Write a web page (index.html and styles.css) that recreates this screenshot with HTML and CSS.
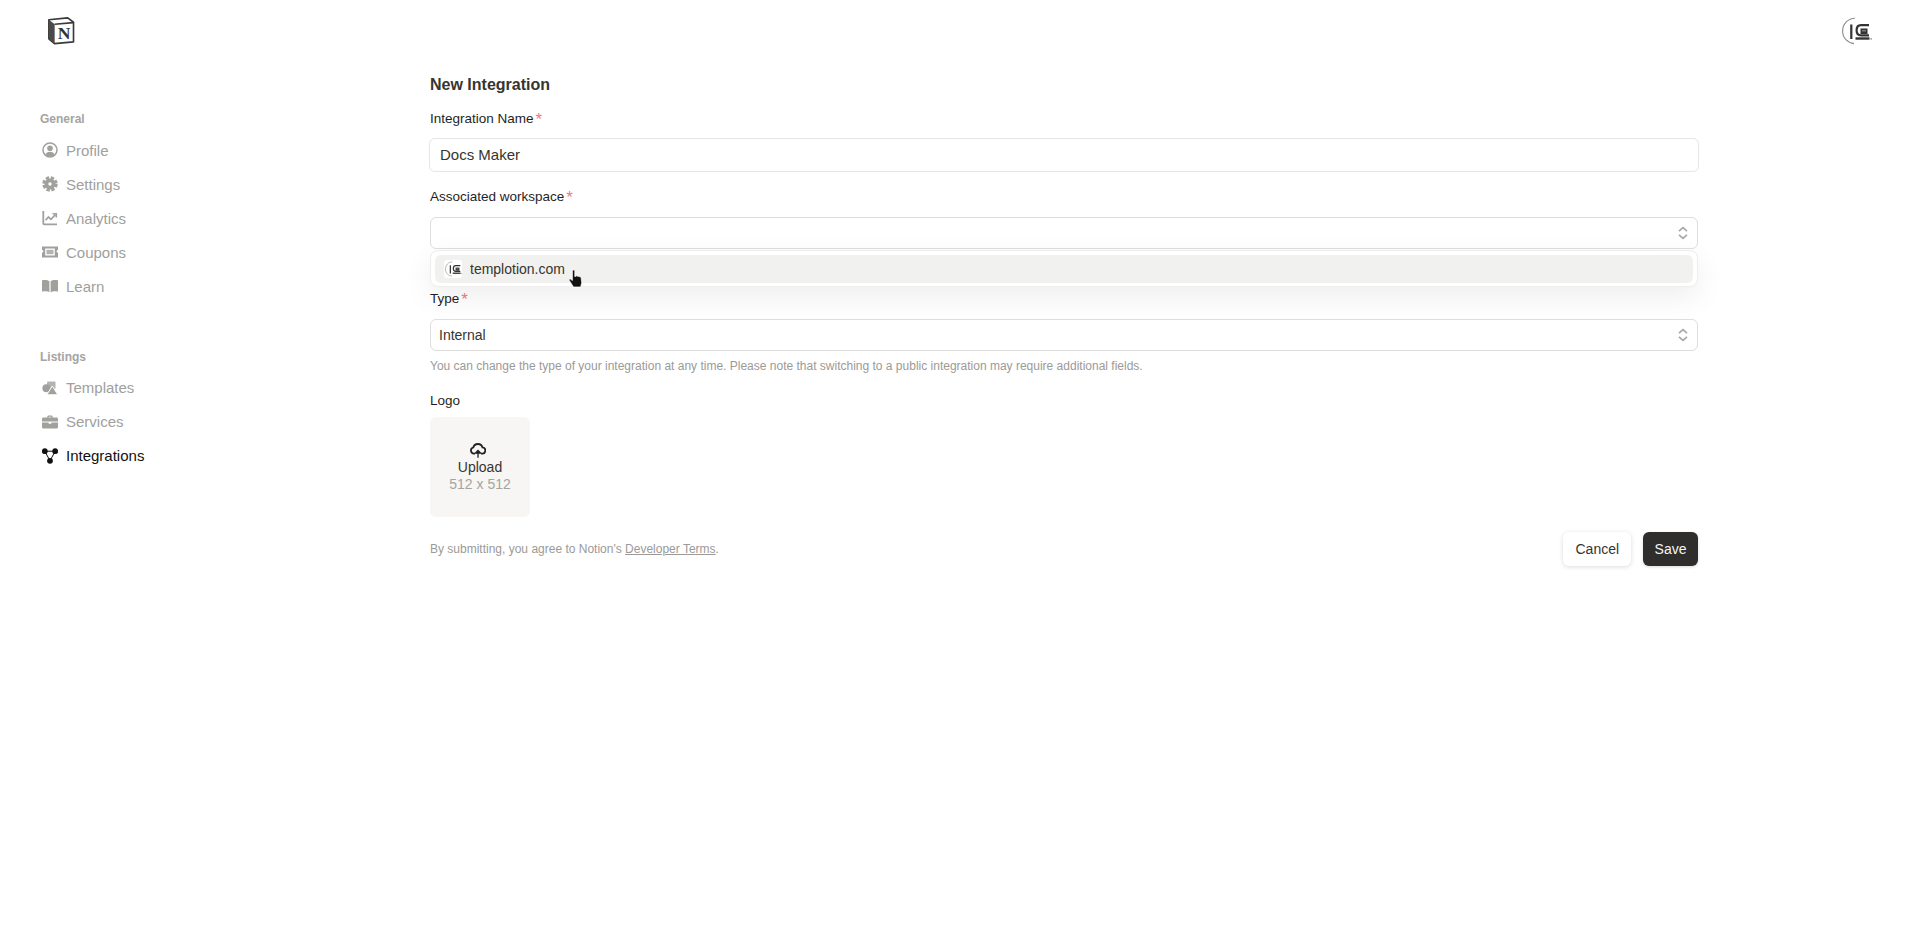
FILE: index.html
```html
<!DOCTYPE html>
<html lang="en">
<head>
<meta charset="utf-8">
<title>New Integration</title>
<link rel="stylesheet" href="styles.css">
</head>
<body>
<svg class="defs" width="0" height="0" aria-hidden="true">
  <symbol id="tlogo" viewBox="0 0 32 32">
    <path d="M15 3.200C8.200 3.200 2.600 9 2.600 16s5 12 11.400 12.600" fill="none" stroke="#8e8e8e" stroke-width="1.100"/>
    <rect x="10.200" y="9.500" width="2.200" height="14.500" fill="#333"/>
    <path d="M29 10.200h-8c-3 0-4.400 2-4.400 5.100s1.400 5.100 4.400 5.100h8" fill="none" stroke="#333" stroke-width="2.200"/>
    <rect x="20.500" y="13.500" width="7" height="5.500" fill="#333"/>
    <rect x="22" y="15.400" width="4" height=".9" fill="#aaa"/>
    <rect x="15.500" y="22.300" width="14" height="2.400" fill="#333"/>
    <rect x="30.500" y="23.300" width="1.200" height="1.200" fill="#555"/>
  </symbol>
</svg>
<header class="top">
  <svg class="notion" viewBox="0 0 28 28" aria-hidden="true">
    <path d="M1.800 3.600 20 1.800l5.600 4.200v19l-18.400 1.600-5.400-4.600z" fill="#fff" stroke="#3a3a3a" stroke-width="1.600" stroke-linejoin="round"/>
    <path d="M1.800 3.600 7.400 8v18.400l-5.600-4.600z" fill="#4a4a4a"/>
    <path d="M7.400 8 25.400 6.400" stroke="#3a3a3a" stroke-width="1.600"/>
    <text x="16.400" y="22" class="notion-n">N</text>
  </svg>
  <svg class="avatar" aria-hidden="true"><use href="#tlogo"/></svg>
</header>
<div class="layout">
  <aside class="side">
    <div class="side-label">General</div>
    <nav class="side-nav">
      <a class="side-item"><svg viewBox="0 0 16 16"><circle cx="8" cy="8" r="7" fill="none" stroke="currentColor" stroke-width="1.500"/><circle cx="8" cy="6.300" r="2.800" fill="currentColor"/><path d="M3.200 12.800c.8-2.100 2.600-3.100 4.800-3.100s4 1 4.800 3.100c-1.200 1.200-2.900 1.900-4.800 1.900s-3.600-.7-4.800-1.900z" fill="currentColor"/></svg><span>Profile</span></a>
      <a class="side-item"><svg viewBox="0 0 16 16"><circle cx="8" cy="8" r="3.600" fill="none" stroke="currentColor" stroke-width="3.800"/><circle cx="8" cy="8" r="6.300" fill="none" stroke="currentColor" stroke-width="2.800" stroke-dasharray="3.300 1.650"/></svg><span>Settings</span></a>
      <a class="side-item"><svg viewBox="0 0 16 16"><path d="M1.300 .9v12.600c0 .6.300.9.900.9H15" fill="none" stroke="currentColor" stroke-width="1.800"/><path d="M3.600 10.200 6.400 7l2.600 2.300 4.400-4.600" fill="none" stroke="currentColor" stroke-width="1.700"/><path d="M10.600 3.800h3.700v3.700" fill="none" stroke="currentColor" stroke-width="1.600"/></svg><span>Analytics</span></a>
      <a class="side-item"><svg viewBox="0 0 16 16"><path fill-rule="evenodd" d="M0 2.500h16v3.400a1.400 1.400 0 0 0 0 2.800v4.800H0V8.700a1.400 1.400 0 0 0 0-2.800zM3.200 4.600v6.800h9.600V4.600z" fill="currentColor"/><rect x="4.500" y="5.800" width="7" height="4.400" fill="currentColor" opacity=".8"/></svg><span>Coupons</span></a>
      <a class="side-item"><svg viewBox="0 0 16 16"><path d="M0 2.300c2.900-.6 5.800-.4 7.400 1V14.300c-1.700-1-4.500-1.200-7.400-.6zM16 2.300c-2.900-.6-5.800-.4-7.400 1V14.300c1.700-1 4.500-1.200 7.400-.6z" fill="currentColor"/></svg><span>Learn</span></a>
    </nav>
    <div class="side-label side-label-next">Listings</div>
    <nav class="side-nav">
      <a class="side-item"><svg viewBox="0 0 16 16"><circle cx="4.400" cy="8.300" r="4" fill="currentColor"/><rect x="5" y="1.500" width="8.500" height="7.500" rx="1" fill="currentColor" opacity=".8"/><path d="M10.300 6 15.800 14.800H4.800z" fill="currentColor" stroke="#fff" stroke-width="1"/></svg><span>Templates</span></a>
      <a class="side-item"><svg viewBox="0 0 18 16"><path fill-rule="evenodd" d="M6 3V2.200C6 1.300 6.700.8 7.500.8h3c.8 0 1.500.5 1.500 1.400V3h4.300C17.300 3 18 3.700 18 4.700v2.800H0V4.700C0 3.700.7 3 1.700 3zm1.500 0h3v-.8h-3z" fill="currentColor"/><path d="M0 8.500h7.500v1.500h3V8.500H18v5c0 1-.7 1.700-1.700 1.700H1.700C.7 15.200 0 14.500 0 13.500z" fill="currentColor"/></svg><span>Services</span></a>
      <a class="side-item side-item-active"><svg viewBox="0 0 16 16"><path d="M2.800 3.200h10.400L8 12.800z" fill="none" stroke="currentColor" stroke-width="1"/><circle cx="2.800" cy="3.200" r="2.900" fill="currentColor"/><circle cx="13.200" cy="3.200" r="2.900" fill="currentColor"/><circle cx="8" cy="12.800" r="2.900" fill="currentColor"/></svg><span>Integrations</span></a>
    </nav>
  </aside>
  <main class="form">
    <h1 class="title">New Integration</h1>
    <label class="label label-first">Integration Name<span class="req">*</span></label>
    <div class="input">Docs Maker</div>
    <label class="label label-second">Associated workspace<span class="req">*</span></label>
    <div class="combo">
      <div class="select select-open">
        <svg class="updown" viewBox="0 0 10 14"><path d="M1 5.200 5 1.600l4 3.600M1 8.800l4 3.600 4-3.600" fill="none" stroke="currentColor" stroke-width="1.700"/></svg>
      </div>
      <div class="menu">
        <div class="menu-item">
          <svg class="menu-logo" aria-hidden="true"><use href="#tlogo"/></svg>
          <span>templotion.com</span>
        </div>
      </div>
      <svg class="hand" viewBox="0 0 16 20" aria-hidden="true">
        <path d="M5 1.300c.8-.6 1.800 0 1.800 1v5.200l1-.1.100-.3c.6-.5 1.400-.3 1.800.3.600-.4 1.400-.2 1.700.4.700-.3 1.500.1 1.700.9l.6 4.800-1 4.500H5.500L1.300 11.400c-.5-.7.200-1.800 1.200-1.300l1.900 1.400V2.300c0-.4.200-.8.600-1z" fill="#111" stroke="#fff" stroke-width=".7"/>
      </svg>
    </div>
    <label class="label label-type">Type<span class="req">*</span></label>
    <div class="select select-value">Internal
      <svg class="updown" viewBox="0 0 10 14"><path d="M1 5.200 5 1.600l4 3.600M1 8.800l4 3.600 4-3.600" fill="none" stroke="currentColor" stroke-width="1.700"/></svg>
    </div>
    <p class="help">You can change the type of your integration at any time. Please note that switching to a public integration may require additional fields.</p>
    <label class="label label-logo">Logo</label>
    <div class="upload">
      <svg class="upload-icon" viewBox="0 0 16 16"><path d="M5 11.600H4.200A3.100 3.100 0 0 1 3.300 5.500 4.800 4.800 0 0 1 12.500 5.400 3.100 3.100 0 0 1 11.900 11.600H11" fill="none" stroke="currentColor" stroke-width="1.800"/><path d="M8 15.800V9M5.300 11.200 8 8.400l2.700 2.800z" fill="currentColor" stroke="currentColor" stroke-width="1.300"/></svg>
      <span class="upload-text">Upload</span>
      <span class="upload-size">512 x 512</span>
    </div>
    <div class="foot">
      <p class="terms">By submitting, you agree to Notion's <a class="terms-link">Developer Terms</a>.</p>
      <div class="actions">
        <button class="btn btn-plain" type="button">Cancel</button>
        <button class="btn btn-dark" type="button">Save</button>
      </div>
    </div>
  </main>
</div>
</body>
</html>
```
FILE: styles.css
```css
* { box-sizing: border-box; }
html, body { margin: 0; height: 100%; }
body {
  background: #fff;
  color: #37352f;
  font-family: "Liberation Sans", Arial, sans-serif;
  font-size: 14px;
  overflow: hidden;
}
.defs { position: absolute; }
.top {
  height: 60px;
  display: flex;
  justify-content: space-between;
  align-items: flex-start;
  padding: 15px 46px 0 47px;
}
.notion { width: 29px; height: 31px; display: block; }
.notion-n {
  font-family: "Liberation Serif", serif;
  font-weight: 700;
  font-size: 17px;
  text-anchor: middle;
  fill: #333;
}
.avatar { width: 32px; height: 32px; display: block; }
.layout { display: flex; }
.side { width: 430px; padding: 49px 0 0 40px; flex: none; }
.side-label {
  font-size: 12px;
  font-weight: 700;
  line-height: 20px;
  color: #a5a4a1;
  margin-bottom: 4px;
}
.side-label-next { margin-top: 44px; margin-bottom: 3.500px; }
.side-nav { display: flex; flex-direction: column; }
.side-item {
  height: 34px;
  display: flex;
  align-items: center;
  gap: 8px;
  padding-left: 2px;
  font-size: 15px;
  color: #a0a09d;
}
.side-item svg { width: 16px; height: 16px; flex: none; }
.side-item-active { color: #111; }
.form { width: 1268px; padding-top: 13px; flex: none; }
.title {
  margin: 0;
  font-size: 16px;
  line-height: 24px;
  font-weight: 700;
  color: #37352f;
}
.label {
  display: block;
  font-size: 13.5px;
  line-height: 20px;
  color: #1f1f1f;
}
.label-first { margin-top: 12px; }
.label-second { margin-top: 15px; }
.label-type { margin-top: 40px; }
.label-logo { margin-top: 17px; }
.req {
  color: #ec7d7d;
  margin-left: 2px;
  font-size: 17px;
  line-height: 0;
  vertical-align: -2px;
}
.input {
  margin: 9px -1px 0;
  height: 34px;
  border: 1px solid #e5e5e3;
  border-radius: 6px;
  padding: 0 10px 2px;
  display: flex;
  align-items: center;
  font-size: 15px;
  color: #37352f;
}
.combo { position: relative; margin-top: 10px; }
.select {
  position: relative;
  height: 32px;
  border: 1px solid #dededc;
  border-radius: 6px;
  padding: 0 8px;
  display: flex;
  align-items: center;
  font-size: 14px;
  color: #37352f;
}
.select-value { margin-top: 10px; }
.updown {
  position: absolute;
  right: 9px;
  top: 8px;
  width: 10px;
  height: 14px;
  color: #a8a8a6;
}
.menu {
  position: absolute;
  top: 33px;
  left: 0;
  right: 0;
  height: 37px;
  background: #fff;
  border: 1px solid #eeeeec;
  border-radius: 8px;
  padding: 4px;
  box-shadow: 0 10px 30px rgba(0, 0, 0, .07);
}
.menu-item {
  height: 28px;
  background: #f1f1ef;
  border-radius: 6px;
  display: flex;
  align-items: center;
  gap: 8px;
  padding-left: 9px;
  color: #37352f;
  font-size: 14px;
}
.menu-logo { width: 18px; height: 18px; background: #fff; border-radius: 3px; }
.hand { position: absolute; left: 138px; top: 52px; width: 16px; height: 20px; z-index: 2; }
.help { margin: 7px 0 0; font-size: 12px; line-height: 16px; color: #9b9a97; }
.upload {
  margin-top: 6px;
  width: 100px;
  height: 100px;
  background: #f7f6f4;
  border-radius: 6px;
  display: flex;
  flex-direction: column;
  align-items: center;
  padding-top: 25px;
  font-size: 14px;
  line-height: 17px;
}
.upload-icon { width: 16px; height: 16px; margin-right: 4px; margin-bottom: 1px; color: #222; }
.upload-text { color: #37352f; }
.upload-size { color: #a5a4a1; }
.foot {
  margin-top: 15px;
  display: flex;
  justify-content: space-between;
  align-items: center;
}
.terms { margin: 0; font-size: 12px; color: #9b9a97; }
.terms-link { text-decoration: underline; }
.actions { display: flex; gap: 12px; }
.btn {
  height: 34px;
  border: 0;
  border-radius: 6px;
  padding: 0 12px;
  font: 14px "Liberation Sans", Arial, sans-serif;
}
.btn-plain { background: #fff; color: #37352f; box-shadow: 0 1px 5px rgba(0, 0, 0, .14); }
.btn-dark { background: #2f2e2c; color: #f5f5f5; padding: 0 11.5px; box-shadow: 0 1px 3px rgba(0, 0, 0, .15); }
```
